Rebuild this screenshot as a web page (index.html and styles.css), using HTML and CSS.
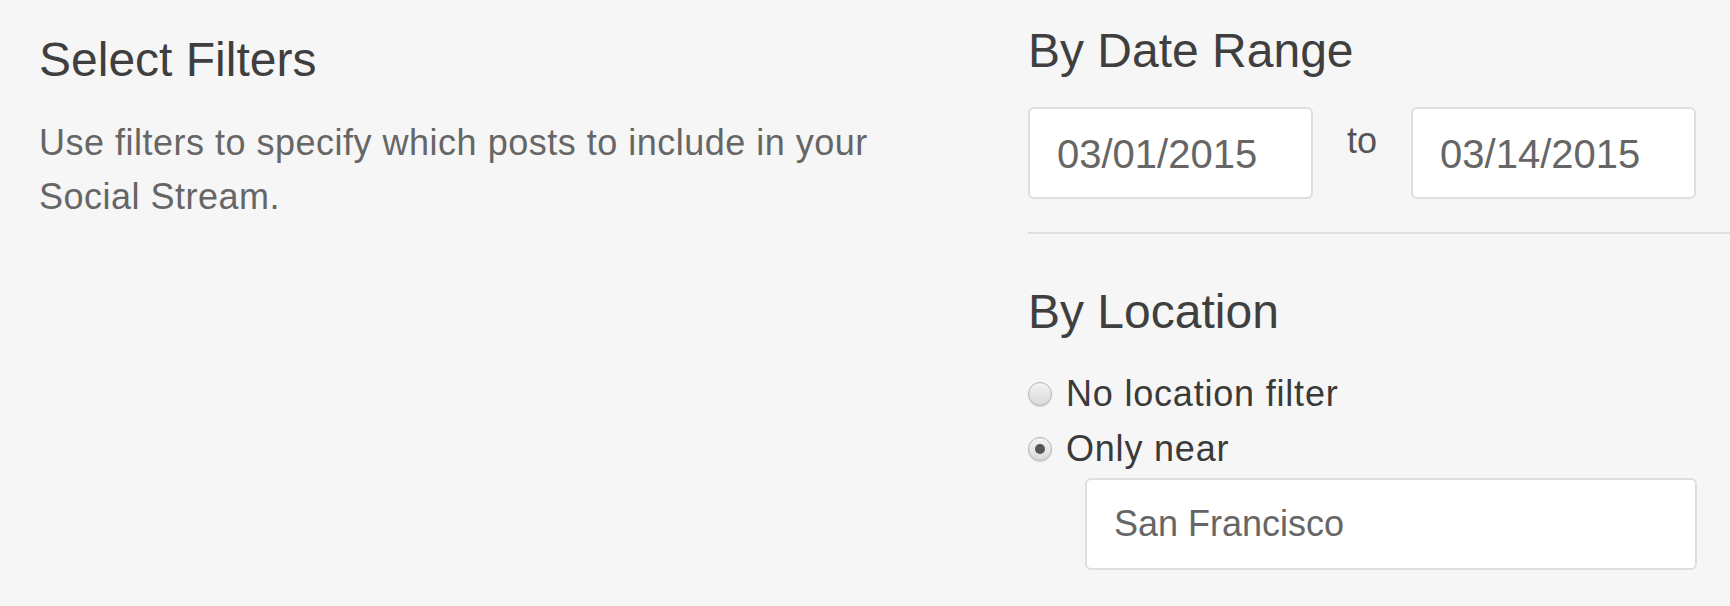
FILE: index.html
```html
<!DOCTYPE html>
<html lang="en">
<head>
    <meta charset="UTF-8">
    <meta name="viewport" content="width=device-width, initial-scale=1.0">
    <title>Select Filters</title>
    <link rel="stylesheet" href="styles.css">
</head>
<body>
    <div class="page">
        <div class="intro">
            <h2 class="title">Select Filters</h2>
            <p class="intro-text">Use filters to specify which posts to include in your Social Stream.</p>
        </div>
        <div class="filters">
            <div class="filter-group">
                <h2 class="filter-title">By Date Range</h2>
                <div class="date-row">
                    <input type="text" class="field date-field" value="03/01/2015">
                    <span class="date-sep">to</span>
                    <input type="text" class="field date-field" value="03/14/2015">
                </div>
            </div>
            <div class="filter-group location-group">
                <h2 class="filter-title">By Location</h2>
                <label class="radio-row">
                    <input type="radio" name="location" class="radio">
                    <span>No location filter</span>
                </label>
                <label class="radio-row">
                    <input type="radio" name="location" class="radio" checked>
                    <span>Only near</span>
                </label>
                <input type="text" class="field location-field" value="San Francisco">
            </div>
        </div>
    </div>
</body>
</html>
```

FILE: styles.css
```css
body {
    margin: 0;
    background-color: #f6f6f6;
    font-family: "Liberation Sans", Arial, sans-serif;
    color: #444;
}
.page {
    display: flex;
    align-items: flex-start;
}
.intro {
    flex: 0 0 1028px;
    box-sizing: border-box;
    padding: 32px 0 0 39px;
}
.title, .filter-title {
    margin: 0;
    font-size: 48px;
    line-height: 56px;
    font-weight: normal;
    color: #3f3f3f;
}
.intro-text {
    margin: 28px 0 0;
    max-width: 880px;
    font-size: 36px;
    line-height: 54px;
    letter-spacing: 0.5px;
    color: #666;
}
.filters {
    flex: 1;
    padding: 23px 33px 0 0;
}
.date-row {
    display: flex;
    align-items: flex-start;
    gap: 34px;
    margin-top: 28px;
}
.field {
    box-sizing: border-box;
    height: 92px;
    padding: 0 20px 0 27px;
    border: 2px solid #dedede;
    border-radius: 6px;
    background-color: #fff;
    font-family: inherit;
    font-size: 36px;
    color: #666;
    outline: none;
}
.date-field {
    width: 285px;
    padding-top: 2px;
    font-size: 40px;
}
.date-sep {
    margin-top: 14px;
    font-size: 36px;
    line-height: 40px;
    color: #555;
}
.location-group {
    margin-top: 33px;
    margin-right: -33px;
    padding-top: 50px;
    border-top: 2px solid #e0e0e0;
}
.location-group .filter-title {
    margin-bottom: 26px;
}
.radio-row {
    display: flex;
    align-items: center;
    gap: 14px;
    height: 55px;
    font-size: 36px;
    letter-spacing: 0.8px;
    color: #3a3a3a;
}
.radio {
    appearance: none;
    -webkit-appearance: none;
    margin: 0;
    width: 24px;
    height: 24px;
    border: 1px solid #b4b4b4;
    border-radius: 50%;
    background: linear-gradient(#f4f4f4, #d9d9d9);
    box-shadow: 0 1px 1px rgba(0, 0, 0, 0.15);
    display: flex;
    align-items: center;
    justify-content: center;
}
.radio:checked::after {
    content: "";
    width: 10px;
    height: 10px;
    border-radius: 50%;
    background-color: #555;
}
.location-field {
    display: block;
    width: 612px;
    margin: 2px 0 0 57px;
}
```
